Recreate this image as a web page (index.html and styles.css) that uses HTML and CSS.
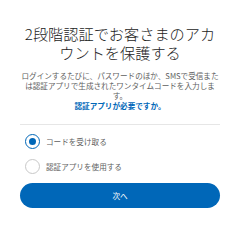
FILE: index.html
```html
<!DOCTYPE html>
<html lang="ja">
<head>
    <meta charset="UTF-8">
    <meta name="viewport" content="width=device-width, initial-scale=1.0">
    <title>2段階認証</title>
    <link rel="stylesheet" href="styles.css">
</head>
<body>
    <div class="container">
        <h1>2段階認証でお客さまのアカウントを保護する</h1>

        <p class="intro">ログインするたびに、パスワードのほか、SMSで受信また<br>は認証アプリで生成されたワンタイムコードを入力します。</p>
        <a class="help-link" href="#">認証アプリが必要ですか。</a>

        <hr class="divider">

        <!-- Method Selection -->
        <div class="options">
            <label class="option"><input type="radio" name="method" value="sms" checked><span class="radio"></span> コードを受け取る</label>
            <label class="option"><input type="radio" name="method" value="app"><span class="radio"></span> 認証アプリを使用する</label>
        </div>

        <button class="next-button">次へ</button>
    </div>
</body>
</html>
```

FILE: styles.css
```css
body {
    font-family: "Noto Sans CJK JP", "Noto Sans", sans-serif;
    margin: 0;
    padding: 0;
    background: #fff;
}

.container {
    padding: 24px 20px 0;
    text-align: center;
}

h1 {
    margin: 0;
    font-size: 15.2px;
    line-height: 19px;
    font-weight: 300;
    color: #1b1b1b;
}

.intro {
    margin: 9px 0 0;
    font-size: 7.6px;
    line-height: 10px;
    color: #5e5e5e;
}

.help-link {
    display: block;
    font-size: 7.6px;
    line-height: 10px;
    font-weight: bold;
    color: #0067b8;
    text-decoration: none;
}

.divider {
    margin: 13px 0 0;
    border: 0;
    border-top: 1px solid #e6e6e6;
}

.options {
    display: flex;
    flex-direction: column;
    gap: 10px;
    padding-top: 9px;
    text-align: left;
}

.option {
    display: flex;
    align-items: center;
    gap: 6px;
    height: 15px;
    padding-left: 5px;
    font-size: 7.6px;
    color: #5e5e5e;
}

.option input {
    display: none;
}

.radio {
    width: 13px;
    height: 13px;
    border: 1px solid #c8c8c8;
    border-radius: 50%;
    box-sizing: content-box;
    position: relative;
}

.option input:checked + .radio {
    border-color: #0067b8;
}

.option input:checked + .radio::after {
    content: "";
    position: absolute;
    left: 3px;
    top: 3px;
    width: 7px;
    height: 7px;
    border-radius: 50%;
    background: #0067b8;
}

.next-button {
    display: block;
    width: 100%;
    height: 25px;
    margin-top: 9px;
    border: 0;
    border-radius: 13px;
    background-color: #0067b8;
    color: white;
    font-family: inherit;
    font-size: 7.6px;
    cursor: pointer;
}
```
